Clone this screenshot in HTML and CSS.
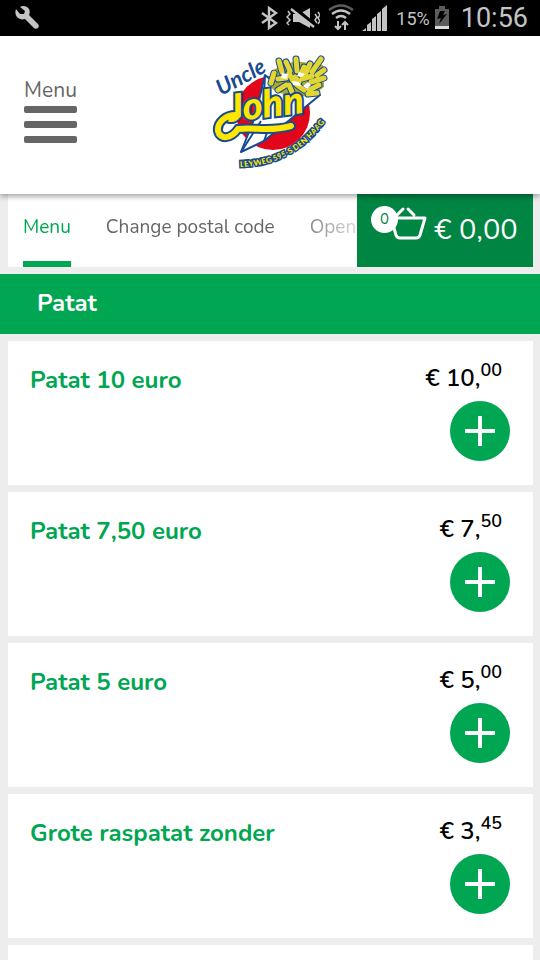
FILE: index.html
```html
<!DOCTYPE html>
<html lang="en">
<head>
    <meta charset="UTF-8">
    <meta name="viewport" content="width=device-width, initial-scale=1.0">
    <title>Uncle John - Menu</title>
    <link rel="stylesheet" href="styles.css">
</head>
<body>
    <!-- Status bar -->
    <div class="status-bar">
        <svg class="status-wrench" width="26" height="26" viewBox="0 0 26 26" fill="#c4c4c4">
            <path d="M6 2C9 0 13 1 15 4c1 2 1 4 0 6l9 9c1 1 1 3 0 4s-3 1-4 0l-9-9c-3 1-6 0-8-2-2-3-2-5-1-8l4 5h4l1-3z"/>
        </svg>
        <svg width="18" height="24" viewBox="0 0 18 24" fill="none" stroke="#c4c4c4" stroke-width="2.4">
            <path d="M2 7l14 10-7 5V2l7 5L2 17"/>
        </svg>
        <svg width="34" height="22" viewBox="0 0 34 22" fill="#c4c4c4">
            <path d="M7 7h6l11-6v20l-11-6H7z"/>
            <path d="M7 0l24 20" stroke="#000" stroke-width="4"/>
            <path d="M5 2l23 18" stroke="#c4c4c4" stroke-width="2.4"/>
            <path d="M2 4l2 3-3 3 3 3-3 3 2 2M29 7l2 3-2 3 2 3M32 5l2 3-2 3 2 3-2 3" fill="none" stroke="#c4c4c4" stroke-width="1.5"/>
        </svg>
        <svg width="26" height="28" viewBox="0 0 26 28" fill="none" stroke="#c4c4c4" stroke-width="2.4">
            <path d="M1 6q12-9 24 0" stroke="#5c5c5c"/>
            <path d="M4 10q9-7 18 0M8 14q5-4 10 0"/>
            <path d="M10 17v8m-3-3l3 3 3-3M17 26v-8m-3 3l3-3 3 3" stroke-width="2"/>
        </svg>
        <svg width="26" height="26" viewBox="0 0 26 26" fill="#c4c4c4">
            <path d="M0 26l4-3v3zM5 26v-6l4-3v9zM10 26V14l4-3v15zM15 26V9l4-3v20zM20 26V4l5-4v26z"/>
        </svg>
        <span class="status-percent">15%</span>
        <svg width="16" height="24" viewBox="0 0 16 24">
            <path d="M1 3h4V0h6v3h4v20H1z" fill="#5c5c5c"/>
            <path d="M1 20h14v3H1z" fill="#ddd"/>
            <path d="M6 5h5L9 9l4-1-8 10 2-6-4 1z" fill="#000"/>
        </svg>
        <span class="status-time">10:56</span>
    </div>

    <!-- Header -->
    <header class="header">
        <button class="menu-button" type="button">
            <span class="menu-label">Menu</span>
            <span class="menu-line"></span>
            <span class="menu-line"></span>
            <span class="menu-line"></span>
        </button>
        <a class="logo" href="#" aria-label="Uncle John">
            <svg width="116" height="118" viewBox="0 0 116 118">
                <circle cx="61" cy="60" r="37" fill="#e3061b"/>
                <!-- paper cone -->
                <path d="M53 22L43 64 29 99l23-11 56-46-40-8z" fill="#fff" stroke="#164a93" stroke-width="2" stroke-linejoin="round"/>
                <path d="M49 68L29 99M58 72L52 88M53 22l-2 40" fill="none" stroke="#164a93" stroke-width="2"/>
                <!-- fries -->
                <path d="M58 34l5-18 20-8 28 4 1 22-14 10-32-4z" fill="#a9a832"/>
                <path class="fry-edge" d="M67 8l3 11M74 9l4 9M84 6l1 12M92 14l-3 8M98 11l-5 11M109 6l-9 13M105 22l7-5M112 25l-13 4M62 20l-3 10M77 20l4 8M66 26l8-1M90 26l10-3M66 37l8-5M80 39l-3-7M85 32l7 5M107 32l-10 5M96 41l9-1M83 24l4 5"/>
                <path class="fry" d="M67 8l3 11M74 9l4 9M84 6l1 12M92 14l-3 8M98 11l-5 11M109 6l-9 13M105 22l7-5M112 25l-13 4M62 20l-3 10M77 20l4 8M66 26l8-1M90 26l10-3M66 37l8-5M80 39l-3-7M85 32l7 5M107 32l-10 5M96 41l9-1M83 24l4 5"/>
                <path d="M70 20l6 1-1 5-6-1zM80 28l7 1 2 4-8-1zM87 19l6 2-3 3-5-1zM91 33l5-4 3 3-4 4z" fill="#fff"/>
                <text class="logo-uncle" transform="translate(9 43) rotate(-28)">Uncle</text>
                <!-- name with its underline -->
                <path class="swash-edge" d="M26 62C13 61 5 70 6 78c2 9 13 8 20-2 18-2 32 3 53-3"/>
                <text class="logo-john" transform="translate(17 69) rotate(-7)">John</text>
                <path class="swash" d="M26 62C13 61 5 70 6 78c2 9 13 8 20-2 18-2 32 3 53-3"/>
                <path id="address-line" d="M28 114Q84 113 117 63" fill="none"/>
                <text class="logo-address"><textPath href="#address-line">LEYWEG 595-S DEN HAAG</textPath></text>
            </svg>
        </a>
    </header>

    <!-- Navigation and basket -->
    <div class="toolbar">
        <nav class="nav">
            <a class="nav-link active" href="#">Menu</a>
            <a class="nav-link" href="#">Change postal code</a>
            <a class="nav-link" href="#">Open</a>
        </nav>
        <button class="basket" type="button">
            <span class="basket-icon">
                <svg width="38" height="36" viewBox="0 0 38 36" fill="none" stroke="#fff" stroke-width="3" stroke-linecap="round" stroke-linejoin="round">
                    <path d="M2 14h34l-5 17q-1 3-4 3H11q-3 0-4-3zM8 11l6-6M25 11l-6-6"/>
                </svg>
                <span class="basket-count">0</span>
            </span>
            <span class="basket-total">€ 0,00</span>
        </button>
    </div>

    <!-- Products -->
    <h2 class="category">Patat</h2>
    <main class="products">
        <article class="product">
            <h3 class="product-name">Patat 10 euro</h3>
            <div class="product-side">
                <div class="price">€ 10,<sup>00</sup></div>
                <button class="add-button" type="button" aria-label="Add"></button>
            </div>
        </article>
        <article class="product">
            <h3 class="product-name">Patat 7,50 euro</h3>
            <div class="product-side">
                <div class="price">€ 7,<sup>50</sup></div>
                <button class="add-button" type="button" aria-label="Add"></button>
            </div>
        </article>
        <article class="product">
            <h3 class="product-name">Patat 5 euro</h3>
            <div class="product-side">
                <div class="price">€ 5,<sup>00</sup></div>
                <button class="add-button" type="button" aria-label="Add"></button>
            </div>
        </article>
        <article class="product">
            <h3 class="product-name">Grote raspatat zonder</h3>
            <div class="product-side">
                <div class="price">€ 3,<sup>45</sup></div>
                <button class="add-button" type="button" aria-label="Add"></button>
            </div>
        </article>
        <div class="product-more"></div>
    </main>
</body>
</html>
```
FILE: styles.css
```css
:root {
    --green: #00a651;
    --dark-green: #008542;
    --grey: #666;
    --light: #ededed;
}

* {
    box-sizing: border-box;
}

body {
    display: flex;
    flex-direction: column;
    min-height: 100vh;
    margin: 0;
    background: var(--light);
    font-family: Nunito, "Open Sans", sans-serif;
    color: #000;
}

button {
    border: none;
    padding: 0;
    font-family: inherit;
    cursor: pointer;
}

/* Status bar */
.status-bar {
    display: flex;
    align-items: center;
    gap: 8px;
    height: 36px;
    padding: 0 12px 0 14px;
    background: #000;
    color: #c4c4c4;
    font-family: Roboto, sans-serif;
}

.status-wrench {
    margin-right: auto;
}

.status-percent {
    font-size: 18px;
}

.status-percent + svg {
    margin: 0 3px 0 -4px;
}

.status-time {
    font-size: 27px;
    line-height: 36px;
}

/* Header */
.header {
    position: relative;
    z-index: 1;
    display: grid;
    grid-template-columns: 1fr auto 1fr;
    align-items: start;
    height: 158px;
    padding: 17px 24px;
    background: #fff;
    box-shadow: 0 2px 6px rgba(0,0,0,0.4);
}

.menu-button {
    display: flex;
    flex-direction: column;
    gap: 8px;
    width: 53px;
    margin-top: 23px;
    background: none;
    color: var(--grey);
}

.menu-label {
    margin-bottom: -6px;
    font-size: 21px;
    line-height: 28px;
}

.menu-line {
    width: 100%;
    height: 7px;
    border-radius: 2px;
    background: var(--grey);
}

.logo svg {
    display: block;
    overflow: visible;
}

.logo-uncle {
    font-family: Lato, sans-serif;
    font-size: 22px;
    font-style: italic;
    font-weight: 700;
    fill: #164a93;
}

.logo-john {
    font-family: Lato, sans-serif;
    font-size: 38px;
    font-style: italic;
    font-weight: 900;
    fill: #ffe600;
    stroke: #164a93;
    stroke-width: 4px;
    paint-order: stroke;
}

.swash-edge,
.swash {
    fill: none;
    stroke: #164a93;
    stroke-width: 10px;
    stroke-linecap: round;
}

.swash {
    stroke: #ffe600;
    stroke-width: 6px;
}

.fry-edge,
.fry {
    fill: none;
    stroke: #164a93;
    stroke-width: 7px;
    stroke-linecap: round;
}

.fry {
    stroke: #e3d632;
    stroke-width: 5px;
}

.logo-address {
    font-family: Lato, sans-serif;
    font-size: 8px;
    font-weight: 900;
    fill: #ffe600;
    stroke: #164a93;
    stroke-width: 3px;
    paint-order: stroke;
}

/* Navigation */
.toolbar {
    display: flex;
    height: 73px;
    margin: 0 7px 7px 8px;
    background: #fff;
}

.nav {
    display: flex;
    flex: 1;
    gap: 35px;
    min-width: 0;
    padding-left: 15px;
    overflow: hidden;
    -webkit-mask-image: linear-gradient(to right, #000 calc(100% - 70px), rgba(0,0,0,0.25));
    mask-image: linear-gradient(to right, #000 calc(100% - 70px), rgba(0,0,0,0.25));
}

.nav-link {
    padding-top: 1px;
    color: var(--grey);
    font-size: 19px;
    line-height: 64px;
    text-decoration: none;
    white-space: nowrap;
}

.nav-link.active {
    border-bottom: 6px solid var(--green);
    color: var(--green);
}

.basket {
    display: flex;
    align-items: flex-start;
    gap: 7px;
    width: 176px;
    padding: 10px 15px 0 32px;
    background: var(--dark-green);
    color: #fff;
}

.basket-icon {
    position: relative;
}

.basket-count {
    position: absolute;
    top: 2px;
    left: -18px;
    width: 27px;
    height: 27px;
    border-radius: 50%;
    background: #fff;
    color: var(--dark-green);
    font-size: 15px;
    line-height: 26px;
}

.basket-total {
    font-size: 29px;
    line-height: 52px;
    white-space: nowrap;
}

/* Products */
.category {
    margin: 0 0 7px;
    padding: 0 37px 2px;
    background: var(--green);
    color: #fff;
    font-size: 24px;
    font-weight: 700;
    line-height: 58px;
}

.products {
    display: flex;
    flex: 1;
    flex-direction: column;
    gap: 7px;
    margin: 0 7px 0 8px;
}

.product {
    display: flex;
    justify-content: space-between;
    height: 144px;
    padding: 22px 23px 0 22px;
    background: #fff;
}

.product-more {
    flex: 1;
    background: #fff;
}

.product-name {
    margin: 0;
    color: var(--green);
    font-size: 24px;
    font-weight: 700;
    line-height: 34px;
}

.product-side {
    display: flex;
    flex-direction: column;
    align-items: flex-end;
    gap: 8px;
}

.price {
    padding-right: 8px;
    font-size: 24px;
    font-weight: 600;
    line-height: 30px;
}

.price sup {
    font-size: 18px;
    line-height: 0;
    vertical-align: 10px;
}

.add-button {
    width: 60px;
    height: 60px;
    border-radius: 50%;
    background:
        linear-gradient(#fff, #fff) center / 30px 4px no-repeat,
        linear-gradient(#fff, #fff) center / 4px 30px no-repeat,
        var(--green);
}
```
